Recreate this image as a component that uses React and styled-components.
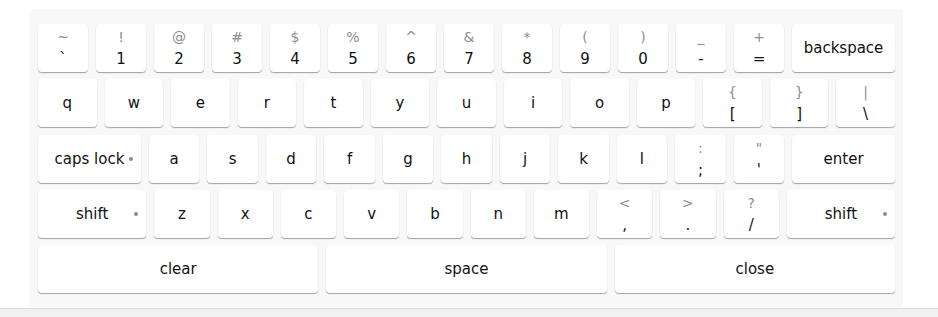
import styled, { createGlobalStyle } from "styled-components";

const rows = [
    [
        { main: '`', shift: '~' }, { main: '1', shift: '!' }, { main: '2', shift: '@' },
        { main: '3', shift: '#' }, { main: '4', shift: '$' }, { main: '5', shift: '%' },
        { main: '6', shift: '^' }, { main: '7', shift: '&' }, { main: '8', shift: '*' },
        { main: '9', shift: '(' }, { main: '0', shift: ')' }, { main: '-', shift: '_' },
        { main: '=', shift: '+' }, { main: 'backspace', grow: 2.06 }
    ],
    [
        { main: 'q' }, { main: 'w' }, { main: 'e' }, { main: 'r' }, { main: 't' },
        { main: 'y' }, { main: 'u' }, { main: 'i' }, { main: 'o' }, { main: 'p' },
        { main: '[', shift: '{' }, { main: ']', shift: '}' }, { main: '\\', shift: '|' }
    ],
    [
        { main: 'caps lock', grow: 2.04, dot: true }, { main: 'a' }, { main: 's' }, { main: 'd' },
        { main: 'f' }, { main: 'g' }, { main: 'h' }, { main: 'j' }, { main: 'k' }, { main: 'l' },
        { main: ';', shift: ':' }, { main: "'", shift: '"' }, { main: 'enter', grow: 2.04 }
    ],
    [
        { main: 'shift', grow: 1.96, dot: true }, { main: 'z' }, { main: 'x' }, { main: 'c' },
        { main: 'v' }, { main: 'b' }, { main: 'n' }, { main: 'm' },
        { main: ',', shift: '<' }, { main: '.', shift: '>' }, { main: '/', shift: '?' },
        { main: 'shift', grow: 1.96, dot: true }
    ],
    [
        { main: 'clear' }, { main: 'space' }, { main: 'close' }
    ]
];

export default function App(){

    return (
        <>
        <GlobalStyle />
        <Page>
            <Keyboard>
                {rows.map((row, index) => 
                    (<KeyRow keys={row} key={index} />)
                )}
            </Keyboard>
        </Page>
        <BottomBar />
        </>
    );

}

function KeyRow(props){

    const { keys } = props;

    return (
        <Row>
            {keys.map((render, index) => 
                (<Key main={render.main} shift={render.shift} grow={render.grow} dot={render.dot} key={index} />)
            )}
        </Row>
    );

}

function Key(props){

    const { main, shift, grow, dot } = props;

    return (
        <KeyButton $grow={grow || 1}>
            {shift && <Shifted>{shift}</Shifted>}
            <Main>{main}</Main>
            {dot && <Dot />}
        </KeyButton>
    );

}

const GlobalStyle = createGlobalStyle`
    body {
        margin: 0;
        background: #ffffff;
        font-family: "DejaVu Sans", sans-serif;
    }
`

const Page = styled.div `
    padding: 9px 35px 0px 30px;
`

const Keyboard = styled.div `
    background-color: #f8f8f8;
    border-radius: 4px 4px 0px 0px;
    padding: 15px 8px 14px 8px;
    display: flex;
    flex-direction: column;
    gap: 7.25px;
`

const Row = styled.div `
    display: flex;
    gap: 8px;
    height: 48px;
`

const KeyButton = styled.div `
    position: relative;
    flex: ${props => props.$grow} 1 0;
    min-width: 0;
    background-color: #ffffff;
    border-radius: 4px;
    box-shadow: 0px 1px 1px rgba(0, 0, 0, 0.35);
    display: flex;
    flex-direction: column;
    align-items: center;
    justify-content: center;
    cursor: pointer;
`

const Shifted = styled.div `
    font-size: 14px;
    line-height: 22px;
    color: #8e8e8e;
`

const Main = styled.div `
    font-size: 15px;
    line-height: 22px;
    color: #111111;
`

const Dot = styled.span `
    position: absolute;
    right: 8px;
    top: 50%;
    width: 4px;
    height: 4px;
    margin-top: -2px;
    border-radius: 50%;
    background-color: #8c8c8c;
`

const BottomBar = styled.div `
    margin-top: 1px;
    height: 9px;
    border-top: 1px solid #d9d9d9;
    background-color: #f0f1f3;
`
